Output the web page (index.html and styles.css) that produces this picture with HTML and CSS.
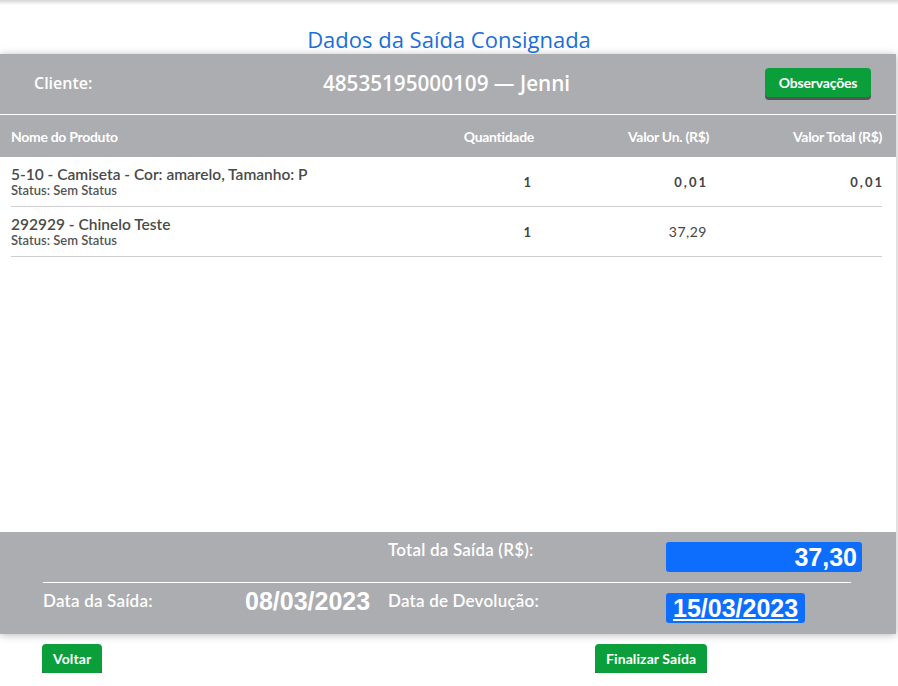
FILE: index.html
```html
<!DOCTYPE html>
<html lang="pt-BR">

<head>
    <meta charset="UTF-8">
    <meta name="viewport" content="width=device-width, initial-scale=1.0">
    <title>Saída Consignada</title>
    <link rel="stylesheet" href="styles.css">
</head>

<body>
    <div class="topo"></div>
    <h1 class="titulo">Dados da Saída Consignada</h1>

    <div class="painel">
        <div class="cliente">
            <span class="cliente_label">Cliente:</span>
            <span class="cliente_nome">48535195000109 — Jenni</span>
            <button class="btn btn_obs">Observações</button>
        </div>

        <div class="cabecalho linha">
            <div>Nome do Produto</div>
            <div class="dir">Quantidade</div>
            <div class="dir">Valor Un. (R$)</div>
            <div class="dir">Valor Total (R$)</div>
        </div>

        <div class="itens">
            <!-- itens da saída -->
            <div class="item linha">
                <div>
                    <div class="produto">5-10 - Camiseta - Cor: amarelo, Tamanho: P</div>
                    <div class="status">Status: Sem Status</div>
                </div>
                <div class="dir num">1</div>
                <div class="dir num">0,01</div>
                <div class="dir num total">0,01</div>
            </div>
            <div class="item linha">
                <div>
                    <div class="produto">292929 - Chinelo Teste</div>
                    <div class="status">Status: Sem Status</div>
                </div>
                <div class="dir num">1</div>
                <div class="dir num leve">37,29</div>
                <div class="dir num total"></div>
            </div>
        </div>

        <div class="rodape">
            <div class="rodape_linha">
                <span></span>
                <span></span>
                <span class="rotulo">Total da Saída (R$):</span>
                <span class="caixa caixa_total">37,30</span>
            </div>
            <div class="separador"></div>
            <div class="rodape_linha">
                <span class="rotulo">Data da Saída:</span>
                <span class="data">08/03/2023</span>
                <span class="rotulo">Data de Devolução:</span>
                <span class="caixa caixa_data">15/03/2023</span>
            </div>
        </div>
    </div>

    <div class="acoes">
        <button class="btn">Voltar</button>
        <button class="btn">Finalizar Saída</button>
    </div>
</body>

</html>
```

FILE: styles.css
```css
* {
    margin: 0;
    padding: 0;
    box-sizing: border-box;
}

body {
    background: #fff;
    font-family: Lato, "Open Sans", sans-serif;
    width: 898px;
}

.topo {
    height: 5px;
    background: linear-gradient(#d6d6d6, #fff);
}

.titulo {
    font-family: "Open Sans", sans-serif;
    font-weight: 500;
    font-size: 22px;
    line-height: 28px;
    color: #1b6fd8;
    text-align: center;
    padding-top: 20px;
    margin-bottom: 1px;
}

.painel {
    width: 896px;
    background: #acadb1;
    box-shadow: 0 1px 8px rgba(0, 0, 0, .28);
}

.cliente {
    display: grid;
    grid-template-columns: 1fr auto 1fr;
    align-items: center;
    height: 61px;
    padding: 0 25px 0 34px;
    border-bottom: 1px solid #fff;
    color: #fff;
}

.cliente_label {
    font-family: "Open Sans", sans-serif;
    font-size: 16px;
    font-weight: 600;
    margin-top: -2px;
}

.cliente_nome {
    font-family: "Open Sans", sans-serif;
    font-size: 20.7px;
    font-weight: 600;
    margin: -3px 0 0 -12px;
}

.btn {
    font-family: Lato, sans-serif;
    font-weight: bold;
    font-size: 14px;
    letter-spacing: 0.1px;
    color: #fff;
    background: #0b9f3b;
    border: none;
    border-radius: 4px;
    height: 29px;
    padding: 0 11px;
    box-shadow: 0 3px 0 #555;
    cursor: pointer;
}

.btn_obs {
    justify-self: end;
    width: 106px;
    padding: 0;
    letter-spacing: -0.2px;
    margin-top: -3px;
}

.linha {
    display: grid;
    grid-template-columns: 1fr 120px 175px 173px;
    align-items: center;
}

.dir {
    text-align: right;
}

.cabecalho {
    height: 42px;
    padding: 0 14px 0 11px;
    color: #fff;
    font-weight: bold;
    font-size: 14px;
    letter-spacing: -0.3px;
}

.itens {
    background: #fff;
    height: 375px;
    padding: 0 14px 0 11px;
}

.item {
    height: 50px;
    border-bottom: 1px solid #cfcfd1;
    color: #444;
}

.produto {
    font-size: 15.5px;
    font-weight: 600;
    line-height: 17px;
    color: #4a4a4a;
}

.status {
    font-size: 13px;
    font-weight: 600;
    line-height: 14px;
    color: #555;
}

.num {
    font-size: 13px;
    font-weight: bold;
    letter-spacing: 2px;
    padding-right: 1px;
}

.num.total {
    padding-right: 0;
    margin-right: -2px;
}

.leve {
    font-size: 14px;
    font-weight: normal;
    letter-spacing: 0.5px;
    padding-right: 2px;
}

.rodape {
    padding: 10px 0 11px 43px;
    color: #fff;
}

.rodape_linha {
    display: grid;
    grid-template-columns: 202px 143px 278px auto;
    align-items: start;
    height: 30px;
}

.rotulo {
    font-size: 17px;
    font-weight: 600;
    line-height: 16px;
    letter-spacing: 0.2px;
}

.data {
    font-family: "Liberation Sans", Arial, sans-serif;
    font-size: 25px;
    font-weight: bold;
    line-height: 16px;
}

.caixa {
    font-family: "Liberation Sans", Arial, sans-serif;
    font-size: 25px;
    font-weight: bold;
    line-height: 30px;
    background: #0d6efd;
    border-radius: 3px;
    justify-self: start;
}

.caixa_total {
    width: 196px;
    text-align: right;
    padding-right: 5px;
}

.caixa_data {
    padding: 0 7px;
    text-decoration: underline;
}

.separador {
    width: 808px;
    height: 1px;
    background: #fff;
    margin: 10px 0;
}

.acoes {
    display: grid;
    grid-template-columns: 553px auto;
    justify-content: start;
    justify-items: start;
    padding: 10px 0 0 42px;
}
```
